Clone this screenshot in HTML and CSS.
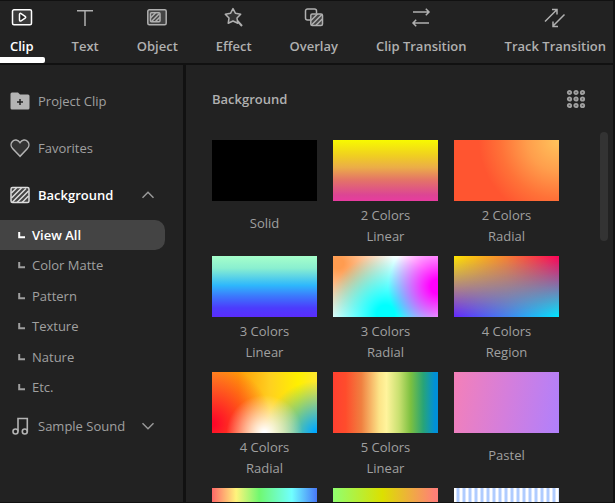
FILE: index.html
```html
<!DOCTYPE html>
<html lang="en">
<head>
<meta charset="utf-8">
<meta name="viewport" content="width=device-width, initial-scale=1">
<title>Media Library</title>
<link rel="stylesheet" href="styles.css">
</head>
<body>
<svg class="defs" aria-hidden="true">
  <defs>
    <symbol id="corner" viewBox="0 0 8 8"><path d="M1.2 1v5.2H7" fill="none" stroke="currentColor" stroke-width="2"/></symbol>
    <symbol id="chevron" viewBox="0 0 14 8"><path d="M1.5 1.2 7 6.7l5.5-5.5" fill="none" stroke="currentColor" stroke-width="1.5"/></symbol>
  </defs>
</svg>
<div class="app">
  <nav class="tabs">
    <button class="tab tab-active" type="button">
      <svg viewBox="0 0 22 22"><rect x="1.500" y="3.800" width="19" height="15" rx="1.500" fill="#3a3a3a"/><path fill="#222" d="M8.500 8.400c0-1 .8-1.300 1.600-.8l4 2.700c.8.600.8 1.300 0 1.900l-4 2.600c-.8.500-1.600.2-1.600-.8z"/></svg>
      <span>Clip</span>
    </button>
    <button class="tab" type="button">
      <svg viewBox="0 0 22 22"><path d="M3 4.800h16M11 4.800V20"/></svg>
      <span>Text</span>
    </button>
    <button class="tab" type="button">
      <svg viewBox="0 0 22 22"><rect x="1.800" y="3.800" width="18.400" height="15" rx="1.500" fill="#444"/><rect x="4.500" y="6.800" width="9.500" height="9" rx="1"/><path d="M4.500 12 9.500 7M5.500 15.500 13.500 7.500M9.500 15.500l4.500-4.500"/></svg>
      <span>Object</span>
    </button>
    <button class="tab" type="button">
      <svg viewBox="0 0 22 22"><path stroke-linejoin="round" fill="#333" d="M10 2.600 12.500 7.300l5.200.9-3.700 3.900.8 5.200-4.800-2.300-4.800 2.300.8-5.200L2.300 8.200 7.500 7.300z"/><path stroke-width="2" d="m14.500 15 4.500 5"/></svg>
      <span>Effect</span>
    </button>
    <button class="tab" type="button">
      <svg viewBox="0 0 22 22"><path d="M7 14H4.500a2 2 0 0 1-2-2V5a2 2 0 0 1 2-2h7a2 2 0 0 1 2 2v2.500"/><rect x="7.800" y="8" width="11.700" height="11.500" rx="1.500" fill="#444"/><path d="m8 14.500 6.500-6.500M8.500 19 19 8.500M13 19.300l6.300-6.300"/></svg>
      <span>Overlay</span>
    </button>
    <button class="tab" type="button">
      <svg viewBox="0 0 22 22"><path d="M3 6h16M15.800 2.800 19 6l-3.200 3.200M19 17H3M6.200 13.800 3 17l3.200 3.200"/></svg>
      <span>Clip Transition</span>
    </button>
    <button class="tab" type="button">
      <svg viewBox="0 0 22 22"><path d="M1 15.500 12.500 4M8 3.500h5v5M20.500 8.500 9 20M9 15.500V20.500h5"/></svg>
      <span>Track Transition</span>
    </button>
  </nav>

  <div class="workspace">
    <aside class="sidebar">
      <button class="category" type="button">
        <svg viewBox="0 0 20 20"><path fill="currentColor" d="M2 1.500h6l2 2h8A1.500 1.500 0 0 1 19.500 5v12a1.500 1.500 0 0 1-1.500 1.500H2A1.500 1.500 0 0 1 .500 17V3A1.500 1.500 0 0 1 2 1.500z"/><path d="M10 8v6M7 11h6" stroke="#222" stroke-width="1.500"/></svg>
        <span>Project Clip</span>
      </button>
      <button class="category" type="button">
        <svg viewBox="0 0 20 20"><path fill="#333" stroke="currentColor" stroke-width="1.500" d="M10 18.300 2.800 10.800C.600 8.500.600 5.300 2.400 3.400c2-2.100 5.600-1.800 7.600 1.300 2-3.100 5.600-3.400 7.600-1.300 1.800 1.900 1.800 5.100-.4 7.400z"/></svg>
        <span>Favorites</span>
      </button>
      <button class="category category-open" type="button" aria-expanded="true">
        <svg viewBox="0 0 20 20"><rect x="1" y="2.500" width="18" height="15" rx="1.500" fill="#444" stroke="currentColor" stroke-width="1.500"/><path stroke="currentColor" stroke-width="1.500" d="M1.500 8 6.500 3M1.500 13 11.500 3M2.500 17 16 3.500M7 17.500 18.500 6M12 17.500l6.500-6.500"/></svg>
        <span>Background</span>
        <svg class="chevron chevron-up"><use href="#chevron"/></svg>
      </button>
      <ul class="submenu">
        <li><a class="sub sub-active" href="#all"><svg><use href="#corner"/></svg>View All</a></li>
        <li><a class="sub" href="#matte"><svg><use href="#corner"/></svg>Color Matte</a></li>
        <li><a class="sub" href="#pattern"><svg><use href="#corner"/></svg>Pattern</a></li>
        <li><a class="sub" href="#texture"><svg><use href="#corner"/></svg>Texture</a></li>
        <li><a class="sub" href="#nature"><svg><use href="#corner"/></svg>Nature</a></li>
        <li><a class="sub" href="#etc"><svg><use href="#corner"/></svg>Etc.</a></li>
      </ul>
      <button class="category" type="button" aria-expanded="false">
        <svg viewBox="0 0 20 20"><g fill="none" stroke="currentColor" stroke-width="1.600"><circle cx="5.500" cy="15.500" r="2.500"/><circle cx="14.800" cy="15.500" r="2.500"/><path d="M8 15.500V2.500h9.300v13"/></g></svg>
        <span>Sample Sound</span>
        <svg class="chevron"><use href="#chevron"/></svg>
      </button>
    </aside>

    <main class="library">
      <header class="library-head">
        <h1>Background</h1>
        <button class="view" type="button" aria-label="Grid view">
          <svg viewBox="0 0 20 20"><g fill="#555" stroke="currentColor" stroke-width="1.800"><circle cx="3.500" cy="3.500" r="1.700"/><circle cx="10" cy="3.500" r="1.700"/><circle cx="16.500" cy="3.500" r="1.700"/><circle cx="3.500" cy="10" r="1.700"/><circle cx="10" cy="10" r="1.700"/><circle cx="16.500" cy="10" r="1.700"/><circle cx="3.500" cy="16.500" r="1.700"/><circle cx="10" cy="16.500" r="1.700"/><circle cx="16.500" cy="16.500" r="1.700"/></g></svg>
        </button>
      </header>
      <div class="scroller">
        <div class="grid">
          <button class="card" type="button"><span class="thumb solid"></span><span class="name name-short">Solid</span></button>
          <button class="card" type="button"><span class="thumb linear-2"></span><span class="name">2 Colors<br>Linear</span></button>
          <button class="card" type="button"><span class="thumb radial-2"></span><span class="name">2 Colors<br>Radial</span></button>
          <button class="card" type="button"><span class="thumb linear-3"></span><span class="name">3 Colors<br>Linear</span></button>
          <button class="card" type="button"><span class="thumb radial-3"></span><span class="name">3 Colors<br>Radial</span></button>
          <button class="card" type="button"><span class="thumb region-4"></span><span class="name">4 Colors<br>Region</span></button>
          <button class="card" type="button"><span class="thumb radial-4"></span><span class="name">4 Colors<br>Radial</span></button>
          <button class="card" type="button"><span class="thumb linear-5"></span><span class="name">5 Colors<br>Linear</span></button>
          <button class="card" type="button"><span class="thumb pastel"></span><span class="name name-short">Pastel</span></button>
          <button class="card" type="button"><span class="thumb rainbow"></span></button>
          <button class="card" type="button"><span class="thumb citrus"></span></button>
          <button class="card" type="button"><span class="thumb stripes"></span></button>
        </div>
        <div class="scrollbar"></div>
      </div>
    </main>
  </div>
</div>
</body>
</html>
```
FILE: styles.css
```css
* {
  box-sizing: border-box;
}

body {
  margin: 0;
  background: #111;
  color: #a0a0a0;
  font-family: "Open Sans", "Noto Sans", sans-serif;
  font-size: 13px;
  line-height: 20px;
}

button {
  padding: 0;
  border: 0;
  background: none;
  color: inherit;
  font: inherit;
  text-align: left;
}

a {
  color: inherit;
  text-decoration: none;
}

.defs {
  position: absolute;
  width: 0;
  height: 0;
}

.app {
  display: flex;
  flex-direction: column;
  height: 100vh;
  overflow: hidden;
  border: solid #111;
  border-width: 1px 2px 1px 0;
}

.tabs {
  display: flex;
  flex: none;
  gap: 38px;
  height: 62px;
  padding: 5px 10px 0;
  background: #222;
}

.tab {
  position: relative;
  display: flex;
  flex: none;
  flex-direction: column;
  align-items: center;
  gap: 8px;
  color: #b0b0b0;
  font-weight: 600;
  white-space: nowrap;
}

.tab svg {
  width: 22px;
  height: 22px;
  fill: none;
  stroke: currentColor;
  stroke-width: 1.5;
}

.tab-active {
  color: #fff;
}

.tab-active::after {
  content: "";
  position: absolute;
  right: -11px;
  bottom: 0;
  left: -10px;
  height: 6px;
  border-radius: 0 2px 2px 0;
  background: #fff;
}

.workspace {
  display: grid;
  grid-template-columns: 183px 1fr;
  flex: 1;
  gap: 3px;
  min-height: 0;
  margin-top: 2px;
}

.sidebar {
  padding: 12px 18px 0 0;
  background: #222;
}

.category {
  display: flex;
  align-items: center;
  gap: 8px;
  width: 100%;
  height: 47px;
  padding: 0 10px;
}

.category > svg {
  flex: none;
  width: 20px;
  height: 20px;
  color: #b4b4b4;
}

.category > .chevron {
  width: 14px;
  height: 8px;
  margin-left: auto;
  color: #999;
}

.chevron-up {
  transform: rotate(180deg);
}

.category-open {
  color: #fff;
  font-weight: 600;
}

.category-open > svg {
  color: #ddd;
}

.submenu {
  display: flex;
  flex-direction: column;
  justify-content: space-between;
  height: 182px;
  margin: 2px 0 0;
  padding: 0;
  list-style: none;
}

.sub {
  display: flex;
  align-items: center;
  gap: 6px;
  height: 30px;
  padding-left: 18px;
  border-radius: 0 10px 10px 0;
}

.sub svg {
  width: 8px;
  height: 8px;
}

.sub-active {
  background: #444;
  color: #fff;
  font-weight: 600;
}

.library {
  display: flex;
  flex-direction: column;
  min-width: 0;
  background: #222;
}

.library-head {
  display: flex;
  flex: none;
  align-items: center;
  justify-content: space-between;
  height: 67px;
  padding: 0 27px 0 26px;
}

.library-head h1 {
  margin: 0;
  color: #b0b0b0;
  font-size: 13px;
  font-weight: 600;
}

.view,
.view svg {
  display: block;
  width: 20px;
  height: 20px;
}

.scroller {
  display: flex;
  flex: 1;
  justify-content: space-between;
  min-height: 0;
  padding-right: 5px;
  overflow: hidden;
}

.grid {
  display: grid;
  grid-template-columns: repeat(3, 1fr);
  grid-auto-rows: 107px;
  flex: 1;
  gap: 9px 16px;
  padding: 8px 41px 0 26px;
}

.scrollbar {
  flex: none;
  width: 8px;
  height: 109px;
  border-radius: 4px;
  background: #333;
}

.card {
  display: flex;
  flex-direction: column;
  gap: 4px;
}

.thumb {
  position: relative;
  flex: none;
  width: 100%;
  height: 61px;
}

.name {
  display: flex;
  flex: 1;
  align-items: center;
  justify-content: center;
  width: 100%;
  line-height: 21px;
  text-align: center;
}

.name-short {
  padding-bottom: 6px;
}

.solid {
  background: #000;
}

.linear-2 {
  background: linear-gradient(#f8fa00, #f0d020 25%, #ebad48 45%, #e47566 65%, #dc4594 90%, #e83ca0);
}

.radial-2 {
  background: radial-gradient(circle at 100% 0, #ffc45c, #ff9e4c 26%, #ff7238 48%, #ff5530 66%);
}

.linear-3 {
  background: linear-gradient(#a6ffcb, #8aefd0 20%, #2eb8fc 48%, #3c78fc 66%, #4c3cfc 85%, #5a2cfc);
}

.radial-3 {
  background:
    radial-gradient(circle 50px at 100% 50%, #f0f 15%, rgba(255, 0, 255, 0) 100%),
    radial-gradient(circle 60px at 50% 95%, #0ff 15%, rgba(0, 255, 255, 0) 100%),
    radial-gradient(circle 55px at 5% 12%, #ff9c50 10%, rgba(255, 156, 80, 0) 100%),
    #fff;
}

.region-4 {
  background: linear-gradient(90deg, #6428ff, #4282f0 50%, #00e8ff);
}

.region-4::before {
  content: "";
  position: absolute;
  inset: 0;
  background: linear-gradient(90deg, #ffe600, #f88030 50%, #ff0058);
  mask-image: linear-gradient(#000, transparent);
}

.radial-4 {
  background:
    radial-gradient(circle 38px at 50% 100%, #fff 5%, rgba(255, 255, 255, 0) 100%),
    radial-gradient(circle 52px at 100% 100%, #00a8ff 5%, rgba(0, 168, 255, 0) 100%),
    radial-gradient(circle 60px at 0 85%, #ff0828 5%, rgba(255, 60, 0, 0) 100%),
    linear-gradient(90deg, #ff9420, #ff9c08 25%, #ffd020 55%, #fff000 82%, #ffe830);
}

.linear-5 {
  background: linear-gradient(90deg, #ff4030, #ff4c2c 12%, #f08040 27%, #fce488 44%, #fff49c 51%, #c8e070 63%, #7cc040 74%, #28a478 86%, #0090d8 97%);
}

.pastel {
  background: linear-gradient(100deg, #f480b8, #d47edc 50%, #b080fc);
}

.rainbow {
  background: linear-gradient(90deg, #ff6868, #fff47c 23%, #70f870 45%, #70ffff 76%, #4878f8);
}

.citrus {
  background: linear-gradient(90deg, #90ff70, #dce000 47%, #ff8078 97%);
}

.stripes {
  background: repeating-linear-gradient(90deg, #fff 0, #fff 2px, #b0ccff 3px, #b0ccff 5px, #fff 6px);
}
```
